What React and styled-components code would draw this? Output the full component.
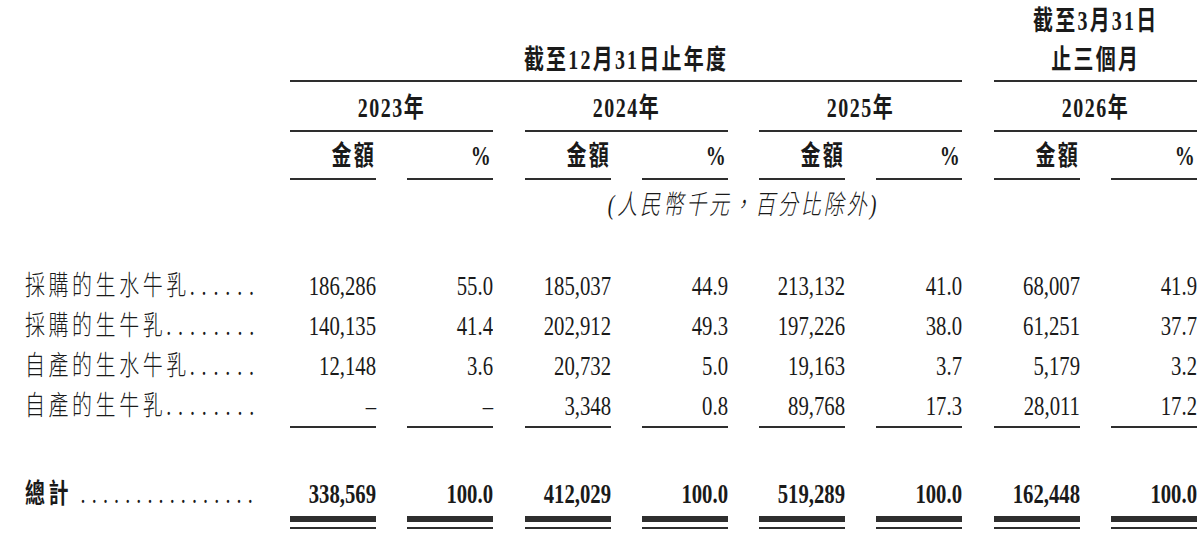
import styled, { createGlobalStyle } from "styled-components";

const INK = "#1a1a1a";
const RULE = "#2e2e2e";
const SERIF = `"Liberation Serif", "Noto Sans CJK TC", serif`;

const GlobalStyle = createGlobalStyle`
  body {
    margin: 0;
    background: #fff;
    color: ${INK};
    font-family: ${SERIF};
  }
`;

const rows = [
  {
    label: "採購的生水牛乳",
    dots: 6,
    values: ["186,286", "55.0", "185,037", "44.9", "213,132", "41.0", "68,007", "41.9"],
  },
  {
    label: "採購的生牛乳",
    dots: 8,
    values: ["140,135", "41.4", "202,912", "49.3", "197,226", "38.0", "61,251", "37.7"],
  },
  {
    label: "自產的生水牛乳",
    dots: 6,
    values: ["12,148", "3.6", "20,732", "5.0", "19,163", "3.7", "5,179", "3.2"],
  },
  {
    label: "自產的生牛乳",
    dots: 8,
    values: ["–", "–", "3,348", "0.8", "89,768", "17.3", "28,011", "17.2"],
  },
];

const totals = ["338,569", "100.0", "412,029", "100.0", "519,289", "100.0", "162,448", "100.0"];

const years = ["2023年", "2024年", "2025年", "2026年"];

const App = () => {
  return (
    <Table>
      <GlobalStyle />

      <Row>
        <HeadCell $cols="2 / 8">
          <Squeeze>截至12月31日止年度</Squeeze>
        </HeadCell>
        <HeadCell $cols="8 / 10" $pad={2}>
          <Squeeze>
            截至3月31日
            <br />
            止三個月
          </Squeeze>
        </HeadCell>
      </Row>

      <Row>
        {years.map((year, i) => (
          <YearCell key={year} $cols={`${2 + i * 2} / span 2`}>
            <Squeeze>{year}</Squeeze>
          </YearCell>
        ))}
      </Row>

      <Row>
        {years.map((year, i) => [
          <SubHead key={year + "a"} $col={2 + i * 2}>
            <Squeeze $origin="right">金額</Squeeze>
          </SubHead>,
          <SubHead key={year + "p"} $col={3 + i * 2}>
            <Squeeze $origin="right">%</Squeeze>
          </SubHead>,
        ])}
      </Row>

      <Row>
        <Note>
          <Squeeze>(人民幣千元，百分比除外)</Squeeze>
        </Note>
      </Row>

      {rows.map((row, r) => (
        <Row key={row.label} $gap={r === 0 ? 41 : 0}>
          <Label>
            <Squeeze $origin="left">
              {row.label}
              <Leader>{".".repeat(row.dots)}</Leader>
            </Squeeze>
          </Label>
          {row.values.map((v, i) => (
            <Num key={i} $rule={r === rows.length - 1}>
              <Squeeze $origin="right">{v}</Squeeze>
            </Num>
          ))}
        </Row>
      ))}

      <Row $gap={46}>
        <Label $bold>
          <Squeeze $origin="left">
            總計 <Leader $tight>{".".repeat(16)}</Leader>
          </Squeeze>
        </Label>
        {totals.map((v, i) => (
          <TotalNum key={i} $bold>
            <Squeeze $origin="right">{v}</Squeeze>
          </TotalNum>
        ))}
      </Row>
    </Table>
  );
};

const Table = styled.div`
  width: 1200px;
  height: 542px;
  overflow: hidden;
`;

const Row = styled.div`
  display: grid;
  grid-template-columns: 258.7px repeat(8, 86px);
  column-gap: 31.3px;
  margin-top: ${(p) => p.$gap || 0}px;
`;

// the print face is condensed, so every run of text is squeezed sideways
const Squeeze = styled.span`
  display: inline-block;
  white-space: nowrap;
  transform: scaleX(0.74);
  transform-origin: ${(p) => p.$origin || "center"};
`;

const HeadCell = styled.div`
  grid-column: ${(p) => p.$cols};
  align-self: end;
  padding-top: ${(p) => p.$pad || 0}px;
  line-height: 39px;
  text-align: center;
  font-size: 27px;
  font-weight: 700;
  letter-spacing: 3px;
  border-bottom: 2px solid ${RULE};
`;

const YearCell = styled.div`
  grid-column: ${(p) => p.$cols};
  padding-top: 4px;
  line-height: 44px;
  text-align: center;
  font-size: 27px;
  font-weight: 700;
  letter-spacing: 2px;
  border-bottom: 2px solid ${RULE};
`;

const SubHead = styled.div`
  grid-column: ${(p) => p.$col};
  padding-top: 2px;
  line-height: 44px;
  text-align: right;
  font-size: 27px;
  font-weight: 700;
  letter-spacing: 3px;
  border-bottom: 2px solid ${RULE};
`;

const Note = styled.div`
  grid-column: 2 / -1;
  padding-top: 5px;
  line-height: 40px;
  text-align: center;
  font-size: 27px;
  font-weight: 300;
  font-style: italic;
  letter-spacing: 4px;
`;

const Label = styled.div`
  grid-column: 1;
  padding-left: 25px;
  line-height: 40px;
  font-size: 27px;
  letter-spacing: 4.8px;
  font-weight: ${(p) => (p.$bold ? 700 : 300)};
`;

const Leader = styled.span`
  font-weight: 400;
  letter-spacing: ${(p) => (p.$tight ? 8.3 : 9.3)}px;
`;

const Num = styled.div`
  display: flex;
  justify-content: flex-end;
  line-height: 40px;
  font-size: 28px;
  font-weight: ${(p) => (p.$bold ? 700 : 400)};
  border-bottom: ${(p) => (p.$rule ? `2px solid ${RULE}` : "none")};
`;

const TotalNum = styled(Num)`
  padding-bottom: 15px;
  background:
    linear-gradient(${RULE}, ${RULE}) left 0 bottom 7px / 100% 6px no-repeat,
    linear-gradient(${RULE}, ${RULE}) left 0 bottom 0 / 100% 2px no-repeat;
`;

export default App;
